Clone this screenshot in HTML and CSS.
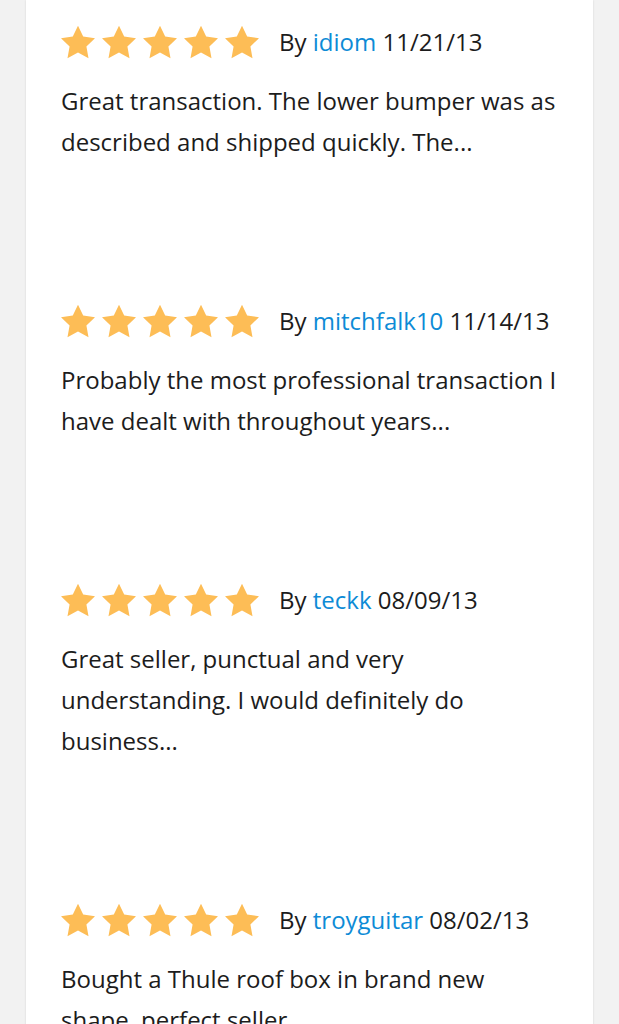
FILE: index.html
```html
<!DOCTYPE html>
<html lang="en">
<head>
<meta charset="utf-8">
<title>Reviews</title>
<link rel="stylesheet" href="styles.css">
</head>
<body>
<div class="card">
  <div class="review">
    <div class="head">
      <div class="stars">
        <svg class="star" viewBox="0 0 24 24"><path d="M12 .587l3.668 7.568 8.332 1.151-6.064 5.828 1.48 8.279-7.416-3.967-7.417 3.967 1.481-8.279-6.064-5.828 8.332-1.151z"/></svg>
        <svg class="star" viewBox="0 0 24 24"><path d="M12 .587l3.668 7.568 8.332 1.151-6.064 5.828 1.48 8.279-7.416-3.967-7.417 3.967 1.481-8.279-6.064-5.828 8.332-1.151z"/></svg>
        <svg class="star" viewBox="0 0 24 24"><path d="M12 .587l3.668 7.568 8.332 1.151-6.064 5.828 1.48 8.279-7.416-3.967-7.417 3.967 1.481-8.279-6.064-5.828 8.332-1.151z"/></svg>
        <svg class="star" viewBox="0 0 24 24"><path d="M12 .587l3.668 7.568 8.332 1.151-6.064 5.828 1.48 8.279-7.416-3.967-7.417 3.967 1.481-8.279-6.064-5.828 8.332-1.151z"/></svg>
        <svg class="star" viewBox="0 0 24 24"><path d="M12 .587l3.668 7.568 8.332 1.151-6.064 5.828 1.48 8.279-7.416-3.967-7.417 3.967 1.481-8.279-6.064-5.828 8.332-1.151z"/></svg>
      </div>
      <div class="meta">By <a class="user" href="#">idiom</a> 11/21/13</div>
    </div>
    <p class="text">Great transaction. The lower bumper was as described and shipped quickly. The...</p>
  </div>
  <div class="review">
    <div class="head">
      <div class="stars">
        <svg class="star" viewBox="0 0 24 24"><path d="M12 .587l3.668 7.568 8.332 1.151-6.064 5.828 1.48 8.279-7.416-3.967-7.417 3.967 1.481-8.279-6.064-5.828 8.332-1.151z"/></svg>
        <svg class="star" viewBox="0 0 24 24"><path d="M12 .587l3.668 7.568 8.332 1.151-6.064 5.828 1.48 8.279-7.416-3.967-7.417 3.967 1.481-8.279-6.064-5.828 8.332-1.151z"/></svg>
        <svg class="star" viewBox="0 0 24 24"><path d="M12 .587l3.668 7.568 8.332 1.151-6.064 5.828 1.48 8.279-7.416-3.967-7.417 3.967 1.481-8.279-6.064-5.828 8.332-1.151z"/></svg>
        <svg class="star" viewBox="0 0 24 24"><path d="M12 .587l3.668 7.568 8.332 1.151-6.064 5.828 1.48 8.279-7.416-3.967-7.417 3.967 1.481-8.279-6.064-5.828 8.332-1.151z"/></svg>
        <svg class="star" viewBox="0 0 24 24"><path d="M12 .587l3.668 7.568 8.332 1.151-6.064 5.828 1.48 8.279-7.416-3.967-7.417 3.967 1.481-8.279-6.064-5.828 8.332-1.151z"/></svg>
      </div>
      <div class="meta">By <a class="user" href="#">mitchfalk10</a> 11/14/13</div>
    </div>
    <p class="text">Probably the most professional transaction I have dealt with throughout years...</p>
  </div>
  <div class="review">
    <div class="head">
      <div class="stars">
        <svg class="star" viewBox="0 0 24 24"><path d="M12 .587l3.668 7.568 8.332 1.151-6.064 5.828 1.48 8.279-7.416-3.967-7.417 3.967 1.481-8.279-6.064-5.828 8.332-1.151z"/></svg>
        <svg class="star" viewBox="0 0 24 24"><path d="M12 .587l3.668 7.568 8.332 1.151-6.064 5.828 1.48 8.279-7.416-3.967-7.417 3.967 1.481-8.279-6.064-5.828 8.332-1.151z"/></svg>
        <svg class="star" viewBox="0 0 24 24"><path d="M12 .587l3.668 7.568 8.332 1.151-6.064 5.828 1.48 8.279-7.416-3.967-7.417 3.967 1.481-8.279-6.064-5.828 8.332-1.151z"/></svg>
        <svg class="star" viewBox="0 0 24 24"><path d="M12 .587l3.668 7.568 8.332 1.151-6.064 5.828 1.48 8.279-7.416-3.967-7.417 3.967 1.481-8.279-6.064-5.828 8.332-1.151z"/></svg>
        <svg class="star" viewBox="0 0 24 24"><path d="M12 .587l3.668 7.568 8.332 1.151-6.064 5.828 1.48 8.279-7.416-3.967-7.417 3.967 1.481-8.279-6.064-5.828 8.332-1.151z"/></svg>
      </div>
      <div class="meta">By <a class="user" href="#">teckk</a> 08/09/13</div>
    </div>
    <p class="text">Great seller, punctual and very understanding. I would definitely do business...</p>
  </div>
  <div class="review">
    <div class="head">
      <div class="stars">
        <svg class="star" viewBox="0 0 24 24"><path d="M12 .587l3.668 7.568 8.332 1.151-6.064 5.828 1.48 8.279-7.416-3.967-7.417 3.967 1.481-8.279-6.064-5.828 8.332-1.151z"/></svg>
        <svg class="star" viewBox="0 0 24 24"><path d="M12 .587l3.668 7.568 8.332 1.151-6.064 5.828 1.48 8.279-7.416-3.967-7.417 3.967 1.481-8.279-6.064-5.828 8.332-1.151z"/></svg>
        <svg class="star" viewBox="0 0 24 24"><path d="M12 .587l3.668 7.568 8.332 1.151-6.064 5.828 1.48 8.279-7.416-3.967-7.417 3.967 1.481-8.279-6.064-5.828 8.332-1.151z"/></svg>
        <svg class="star" viewBox="0 0 24 24"><path d="M12 .587l3.668 7.568 8.332 1.151-6.064 5.828 1.48 8.279-7.416-3.967-7.417 3.967 1.481-8.279-6.064-5.828 8.332-1.151z"/></svg>
        <svg class="star" viewBox="0 0 24 24"><path d="M12 .587l3.668 7.568 8.332 1.151-6.064 5.828 1.48 8.279-7.416-3.967-7.417 3.967 1.481-8.279-6.064-5.828 8.332-1.151z"/></svg>
      </div>
      <div class="meta">By <a class="user" href="#">troyguitar</a> 08/02/13</div>
    </div>
    <p class="text">Bought a Thule roof box in brand new shape, perfect seller.</p>
  </div>
</div>
</body>
</html>
```

FILE: styles.css
```css
html, body {
  margin: 0;
  padding: 0;
  background: #f2f2f2;
  height: 1024px;
  overflow: hidden;
}
body {
  font-family: "Open Sans", "Liberation Sans", sans-serif;
  color: #1c1c1c;
}
.card {
  margin: 0 26px;
  background: #ffffff;
  box-shadow: 0 0 2px rgba(0, 0, 0, 0.12);
  padding: 21px 35px 0 35px;
  min-height: 1100px;
}
.review {
  margin-bottom: 138px;
}
.head {
  display: flex;
  align-items: center;
  height: 41px;
  gap: 20px;
}
.stars {
  display: flex;
  gap: 7px;
}
.star {
  width: 34px;
  height: 34px;
  fill: #fdbd56;
  display: block;
}
.meta {
  font-size: 24px;
  line-height: 41px;
}
.user {
  color: #0d8bd6;
  text-decoration: none;
}
.text {
  margin: 18px 0 0 0;
  font-size: 24px;
  line-height: 41px;
}
```
